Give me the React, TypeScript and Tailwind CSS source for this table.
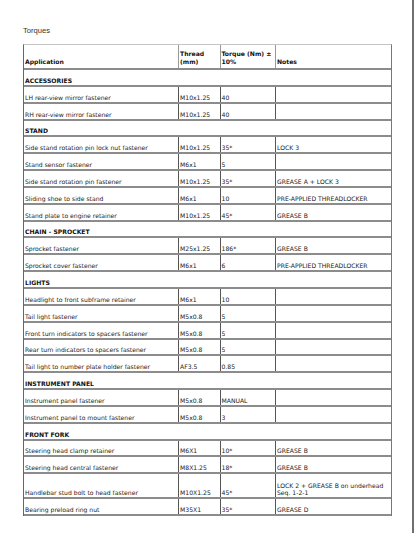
type Row = { app: string; thread?: string; torque?: string; notes?: string[]; tall?: boolean };
type Section = { title: string; rows: Row[] };

const sections: Section[] = [
  {
    title: "ACCESSORIES",
    rows: [
      { app: "LH rear-view mirror fastener", thread: "M10x1.25", torque: "40" },
      { app: "RH rear-view mirror fastener", thread: "M10x1.25", torque: "40" },
    ],
  },
  {
    title: "STAND",
    rows: [
      { app: "Side stand rotation pin lock nut fastener", thread: "M10x1.25", torque: "35*", notes: ["LOCK 3"] },
      { app: "Stand sensor fastener", thread: "M6x1", torque: "5" },
      { app: "Side stand rotation pin fastener", thread: "M10x1.25", torque: "35*", notes: ["GREASE A + LOCK 3"] },
      { app: "Sliding shoe to side stand", thread: "M6x1", torque: "10", notes: ["PRE-APPLIED THREADLOCKER"] },
      { app: "Stand plate to engine retainer", thread: "M10x1.25", torque: "45*", notes: ["GREASE B"] },
    ],
  },
  {
    title: "CHAIN - SPROCKET",
    rows: [
      { app: "Sprocket fastener", thread: "M25x1.25", torque: "186*", notes: ["GREASE B"] },
      { app: "Sprocket cover fastener", thread: "M6x1", torque: "6", notes: ["PRE-APPLIED THREADLOCKER"] },
    ],
  },
  {
    title: "LIGHTS",
    rows: [
      { app: "Headlight to front subframe retainer", thread: "M6x1", torque: "10" },
      { app: "Tail light fastener", thread: "M5x0.8", torque: "5" },
      { app: "Front turn indicators to spacers fastener", thread: "M5x0.8", torque: "5" },
      { app: "Rear turn indicators to spacers fastener", thread: "M5x0.8", torque: "5" },
      { app: "Tail light to number plate holder fastener", thread: "AF3.5", torque: "0.85" },
    ],
  },
  {
    title: "INSTRUMENT PANEL",
    rows: [
      { app: "Instrument panel fastener", thread: "M5x0.8", torque: "MANUAL" },
      { app: "Instrument panel to mount fastener", thread: "M5x0.8", torque: "3" },
    ],
  },
  {
    title: "FRONT FORK",
    rows: [
      { app: "Steering head clamp retainer", thread: "M6X1", torque: "10*", notes: ["GREASE B"] },
      { app: "Steering head central fastener", thread: "M8X1.25", torque: "18*", notes: ["GREASE B"] },
      {
        app: "Handlebar stud bolt to head fastener",
        thread: "M10X1.25",
        torque: "45*",
        notes: ["LOCK 2 + GREASE B on underhead", "Seq. 1-2-1"],
        tall: true,
      },
      { app: "Bearing preload ring nut", thread: "M35X1", torque: "35*", notes: ["GREASE D"] },
    ],
  },
];

const cell = "flex flex-col justify-end pl-[1px] pb-[1px] overflow-hidden whitespace-nowrap";
const divider = "border-l border-[#555]";

function DataRow({ row }: { row: Row }) {
  return (
    <div
      className={`grid grid-cols-[154px_41.5px_55.5px_1fr] border-b-2 border-[#8c8c8c] ${
        row.tall ? "h-[24.7px]" : "h-[16.85px]"
      }`}
    >
      <div className={cell}>{row.app}</div>
      <div className={`${cell} ${divider}`}>{row.thread}</div>
      <div className={`${cell} ${divider}`}>{row.torque}</div>
      <div className={`${cell} ${divider}`}>
        {row.notes?.map((n) => (
          <span key={n}>{n}</span>
        ))}
      </div>
    </div>
  );
}

export default function App() {
  return (
    <div className="w-[414px] h-[533px] bg-white border-r-2 border-[#707070]">
      <div className="pt-[26px] pl-[23px]">
        <p className="h-[10px] leading-[10px] mb-[8px] text-[7.6px] text-[#333] font-['Liberation_Sans',Arial,sans-serif]">
          Torques
        </p>
        <div className="w-[369px] border-x border-t border-l-[#666] border-r-[#777] border-t-[#c4c4c4] text-[6.1px] leading-[7px] text-[#1a1a1a] font-['DejaVu_Sans',Verdana,sans-serif]">
          <div className="grid grid-cols-[154px_41.5px_55.5px_1fr] h-[25px] border-b-2 border-[#8c8c8c] font-bold text-[#111] leading-[8px]">
            <div className={`${cell} pb-[2px]`}>Application</div>
            <div className={`${cell} pb-[2px] border-l border-[#999]`}>
              <span>Thread</span>
              <span>(mm)</span>
            </div>
            <div className={`${cell} pb-[2px] border-l border-[#999]`}>
              <span>Torque (Nm) ±</span>
              <span>10%</span>
            </div>
            <div className={`${cell} pb-[2px] border-l border-[#999]`}>Notes</div>
          </div>
          {sections.map((s) => (
            <div key={s.title}>
              <div className="h-[16.85px] border-b-2 border-[#8c8c8c] flex items-end pl-[1px] pb-[1px] font-bold text-[#111]">
                {s.title}
              </div>
              {s.rows.map((r) => (
                <DataRow key={r.app} row={r} />
              ))}
            </div>
          ))}
        </div>
      </div>
    </div>
  );
}
